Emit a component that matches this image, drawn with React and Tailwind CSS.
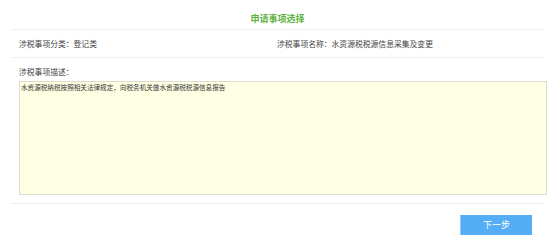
export default function App() {
  const font = { fontFamily: '"Noto Sans CJK SC", "Liberation Sans", sans-serif' };
  return (
    <div className="w-[554px] h-[244px] bg-white" style={font}>
      <div className="ml-[11px] w-[533px]">
        <div className="h-[30px] flex items-center justify-center border-b border-[#f0f0f0]">
          <span className="text-[9px] font-bold text-[#5fb23f] leading-none pt-[7px]">申请事项选择</span>
        </div>
        <div className="h-[28px] flex items-center border-b border-[#f0f0f0] text-[7.8px] text-[#444] leading-none">
          <div className="pl-[8px] w-[266px]">涉税事项分类：登记类</div>
          <div>涉税事项名称：水资源税税源信息采集及变更</div>
        </div>
        <div className="pl-[8px] pt-[10px] text-[7.8px] text-[#444] leading-none">涉税事项描述：</div>
        <div className="ml-[8px] mt-[5px] w-[528px] h-[114px] border border-[#dcdccc] bg-[#ffffe4] px-[1px] pt-[1px] text-[6.6px] text-[#333] leading-[9px]">
          水资源税纳税按照相关法律规定，向税务机关做水资源税税源信息报告
        </div>
        <div className="mt-[8px] border-b border-[#f0f0f0]"></div>
        <div className="flex justify-end pr-[12px] pt-[11px]">
          <button className="w-[72px] h-[20px] bg-[#55adf5] text-white text-[9px] leading-none border-l border-[#8cc8f8]">下一步</button>
        </div>
      </div>
    </div>
  );
}
